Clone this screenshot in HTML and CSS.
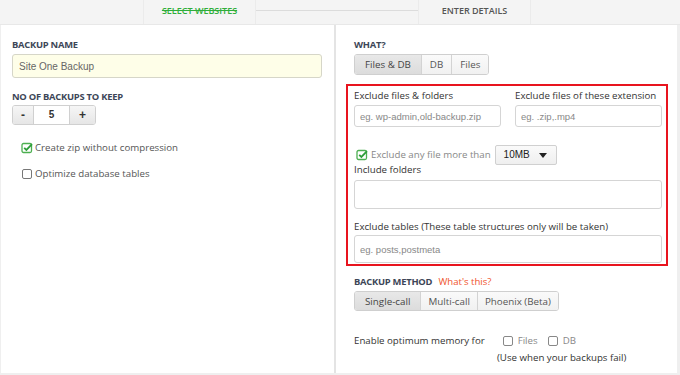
FILE: index.html
```html
<!DOCTYPE html>
<html lang="en">

<head>
    <meta charset="UTF-8">
    <meta name="viewport" content="width=device-width, initial-scale=1.0">
    <title>Backup Settings</title>
    <link rel="stylesheet" href="styles.css">
</head>

<body>
    <div class="steps">
        <div class="step-gap"></div>
        <div class="step done">SELECT WEBSITES</div>
        <div class="step-line"></div>
        <div class="step current">ENTER DETAILS</div>
        <div class="step-rest"></div>
    </div>

    <div class="panel">
        <div class="col left">
            <h3>BACKUP NAME</h3>
            <input class="name-input" type="text" value="Site One Backup">

            <h3>NO OF BACKUPS TO KEEP</h3>
            <div class="stepper">
                <button class="step-btn">-</button>
                <span class="step-val">5</span>
                <button class="step-btn">+</button>
            </div>

            <label class="check first">
                <svg class="box" viewBox="0 0 12 12"><rect x="1" y="1.5" width="9.5" height="9" rx="1.5" fill="none" stroke="#4caf50" stroke-width="1.3"/><path d="M3.2 5.8 L5.4 8 L11 2.2" fill="none" stroke="#2e9e3a" stroke-width="1.8"/></svg>
                Create zip without compression
            </label>
            <label class="check second">
                <svg class="box" viewBox="0 0 12 12"><rect x="1.5" y="1.5" width="9" height="9" rx="1.5" fill="none" stroke="#777" stroke-width="1"/></svg>
                Optimize database tables
            </label>
        </div>

        <div class="col right">
            <h3>WHAT?</h3>
            <div class="btn-group">
                <button class="active">Files &amp; DB</button>
                <button>DB</button>
                <button>Files</button>
            </div>

            <div class="options">
                <div class="row">
                    <div class="field">
                        <label>Exclude files &amp; folders</label>
                        <input type="text" placeholder="eg. wp-admin,old-backup.zip">
                    </div>
                    <div class="field">
                        <label>Exclude files of these extension</label>
                        <input type="text" placeholder="eg. .zip,.mp4">
                    </div>
                </div>

                <div class="size-row">
                    <svg class="box" viewBox="0 0 12 12"><rect x="1" y="1.5" width="9.5" height="9" rx="1.5" fill="none" stroke="#4caf50" stroke-width="1.3"/><path d="M3.2 5.8 L5.4 8 L11 2.2" fill="none" stroke="#2e9e3a" stroke-width="1.8"/></svg>
                    <span>Exclude any file more than</span>
                    <div class="select">10MB <span class="caret"></span></div>
                </div>

                <label class="folders-label">Include folders</label>
                <input class="tall" type="text">

                <label class="tables-label">Exclude tables (These table structures only will be taken)</label>
                <input class="tall last" type="text" placeholder="eg. posts,postmeta">
            </div>

            <h3 class="method">BACKUP METHOD <a href="#">What's this?</a></h3>
            <div class="btn-group small">
                <button class="active">Single-call</button>
                <button>Multi-call</button>
                <button>Phoenix (Beta)</button>
            </div>

            <div class="memory">
                <span>Enable optimum memory for</span>
                <span class="mem-opt"><svg class="box" viewBox="0 0 12 12"><rect x="1.5" y="1.5" width="9" height="9" rx="1.5" fill="none" stroke="#888" stroke-width="1"/></svg>Files</span>
                <span class="mem-opt"><svg class="box" viewBox="0 0 12 12"><rect x="1.5" y="1.5" width="9" height="9" rx="1.5" fill="none" stroke="#888" stroke-width="1"/></svg>DB</span>
            </div>
            <p class="hint">(Use when your backups fail)</p>
        </div>
    </div>
</body>

</html>
```

FILE: styles.css
```css
body {
    margin: 0;
    background-color: #efefef;
    font-family: "Open Sans", sans-serif;
    line-height: 12px;
    color: #444;
    width: 680px;
    height: 375px;
    overflow: hidden;
}

.steps {
    display: flex;
    height: 24px;
    background-color: #f4f4f4;
    border-bottom: 1px solid #e8e8e8;
}

.step-gap {
    width: 143px;
}

.step {
    width: 113px;
    text-align: center;
    font-size: 9px;
    font-weight: 600;
    line-height: 22px;
    border-left: 1px solid #ebebeb;
    border-right: 1px solid #ebebeb;
    box-sizing: border-box;
}

.step.done {
    color: #2fae3a;
    text-decoration: line-through;
}

.step.current {
    color: #555;
}

.step-line {
    width: 162px;
    height: 1px;
    margin-top: 10px;
    background-color: #dcdcdc;
}

.step-rest {
    flex: 1;
}

.panel {
    display: flex;
    margin: 0 3px 1px 1px;
    height: 348px;
    background-color: #fff;
}

.col {
    box-sizing: border-box;
}

.left {
    width: 335px;
    padding: 14px 15px 0 11px;
    border-right: 2px solid #e4e4e4;
}

.right {
    flex: 1;
    padding: 14px 0 0 18px;
}

h3 {
    margin: 0 0 3px;
    font-size: 9.4px;
    letter-spacing: -0.25px;
    line-height: 12px;
    font-weight: 700;
    color: #3d4657;
}

.name-input {
    display: block;
    box-sizing: border-box;
    width: 310px;
    height: 24px;
    margin: 0 0 13px;
    padding: 0 6px;
    border: 1px solid #d6d6c8;
    border-radius: 3px;
    background-color: #fefee8;
    font-family: "Liberation Sans", Arial, sans-serif;
    font-size: 10px;
    color: #666;
}

.left h3 + .stepper {
    margin-top: -1px;
}

.stepper {
    display: flex;
    box-sizing: border-box;
    width: 84px;
    height: 20px;
    border: 1px solid #d0d0d0;
    border-radius: 3px;
    overflow: hidden;
}

.step-btn {
    width: 21px;
    padding: 0;
    border: none;
    background: linear-gradient(#f6f6f6, #e6e6e6);
    font-family: "Liberation Sans", Arial, sans-serif;
    font-size: 12px;
    font-weight: 700;
    color: #333;
}

.step-btn:first-child {
    border-right: 1px solid #d0d0d0;
}

.step-btn:last-child {
    width: 26px;
    border-left: 1px solid #d0d0d0;
}

.step-val {
    flex: 1;
    text-align: center;
    font-family: "Liberation Sans", Arial, sans-serif;
    font-size: 10px;
    font-weight: 700;
    line-height: 18px;
    color: #333;
}

.check {
    display: flex;
    align-items: center;
    gap: 2px;
    margin-left: 9px;
    font-size: 9.7px;
    color: #555;
    height: 12px;
}

.check.first {
    margin-top: 17px;
}

.check.second {
    margin-top: 14px;
}

.box {
    width: 12px;
    height: 12px;
    flex-shrink: 0;
}

.btn-group {
    display: inline-flex;
    border: 1px solid #cfcfcf;
    border-radius: 3px;
    overflow: hidden;
    vertical-align: top;
}

.btn-group button {
    height: 19px;
    padding: 0 8px;
    border: none;
    border-left: 1px solid #d3d3d3;
    background: linear-gradient(#fafafa, #f1f1f1);
    font-family: "Open Sans", sans-serif;
    font-size: 9.8px;
    color: #555;
}

.btn-group.small button {
    height: 18px;
    padding: 0 7px;
}

.btn-group button:first-child {
    border-left: none;
}

.btn-group button.active,
.btn-group.small button.active {
    background: linear-gradient(#e8e8e8, #dcdcdc);
    color: #444;
    padding: 0 10px;
}

.options {
    width: 322px;
    box-sizing: border-box;
    margin: 9px 0 0 -8px;
    padding: 4px 6px 1px 6px;
    border: 2px solid #e8141e;
    display: flex;
    flex-direction: column;
}

.options label {
    display: block;
    font-size: 9.7px;
    color: #333;
    margin-bottom: 3px;
}

.options label.folders-label {
    margin-top: -1px;
    margin-bottom: 4px;
}

.options label.tables-label {
    margin-top: 12px;
    margin-bottom: 2px;
}

.row {
    display: flex;
    gap: 14px;
}

.field {
    width: 147px;
}

.options input {
    display: block;
    box-sizing: border-box;
    width: 147px;
    height: 22px;
    padding: 0 5px;
    border: 1px solid #d5d5d5;
    border-radius: 3px;
    background-color: #fff;
    font-family: "Liberation Sans", Arial, sans-serif;
    font-size: 9.5px;
    color: #666;
}

.options input::placeholder {
    color: #888;
}

.options input.tall {
    width: 308px;
    height: 29px;
}

.options input.tall.last {
    height: 28px;
}

.size-row {
    display: flex;
    align-items: center;
    gap: 3px;
    height: 20px;
    margin: 18px 0 0 2px;
    font-size: 9.7px;
    color: #888;
}

.select {
    margin-left: 1px;
    width: 62px;
    height: 20px;
    box-sizing: border-box;
    padding-left: 8px;
    border: 1px solid #d0d0d0;
    border-radius: 2px;
    background: linear-gradient(#fafafa, #efefef);
    font-family: "Liberation Sans", Arial, sans-serif;
    font-size: 10px;
    line-height: 18px;
    color: #222;
    position: relative;
}

.caret {
    position: absolute;
    right: 9px;
    top: 7px;
    border-left: 4px solid transparent;
    border-right: 4px solid transparent;
    border-top: 5px solid #222;
}

.method {
    margin-top: 10px;
}

.method a {
    margin-left: 4px;
    color: #f0532c;
    font-weight: 400;
    font-size: 9.6px;
    letter-spacing: 0;
    text-decoration: none;
}

.memory {
    display: flex;
    align-items: center;
    height: 12px;
    margin: 24px 0 0 0;
    font-size: 9.7px;
    color: #333;
}

.mem-opt {
    display: flex;
    align-items: center;
    gap: 4px;
    color: #888;
    margin-left: 17px;
}

.mem-opt + .mem-opt {
    margin-left: 9px;
}

.hint {
    margin: 5px 0 0 143px;
    font-size: 9.7px;
    color: #333;
}
```
